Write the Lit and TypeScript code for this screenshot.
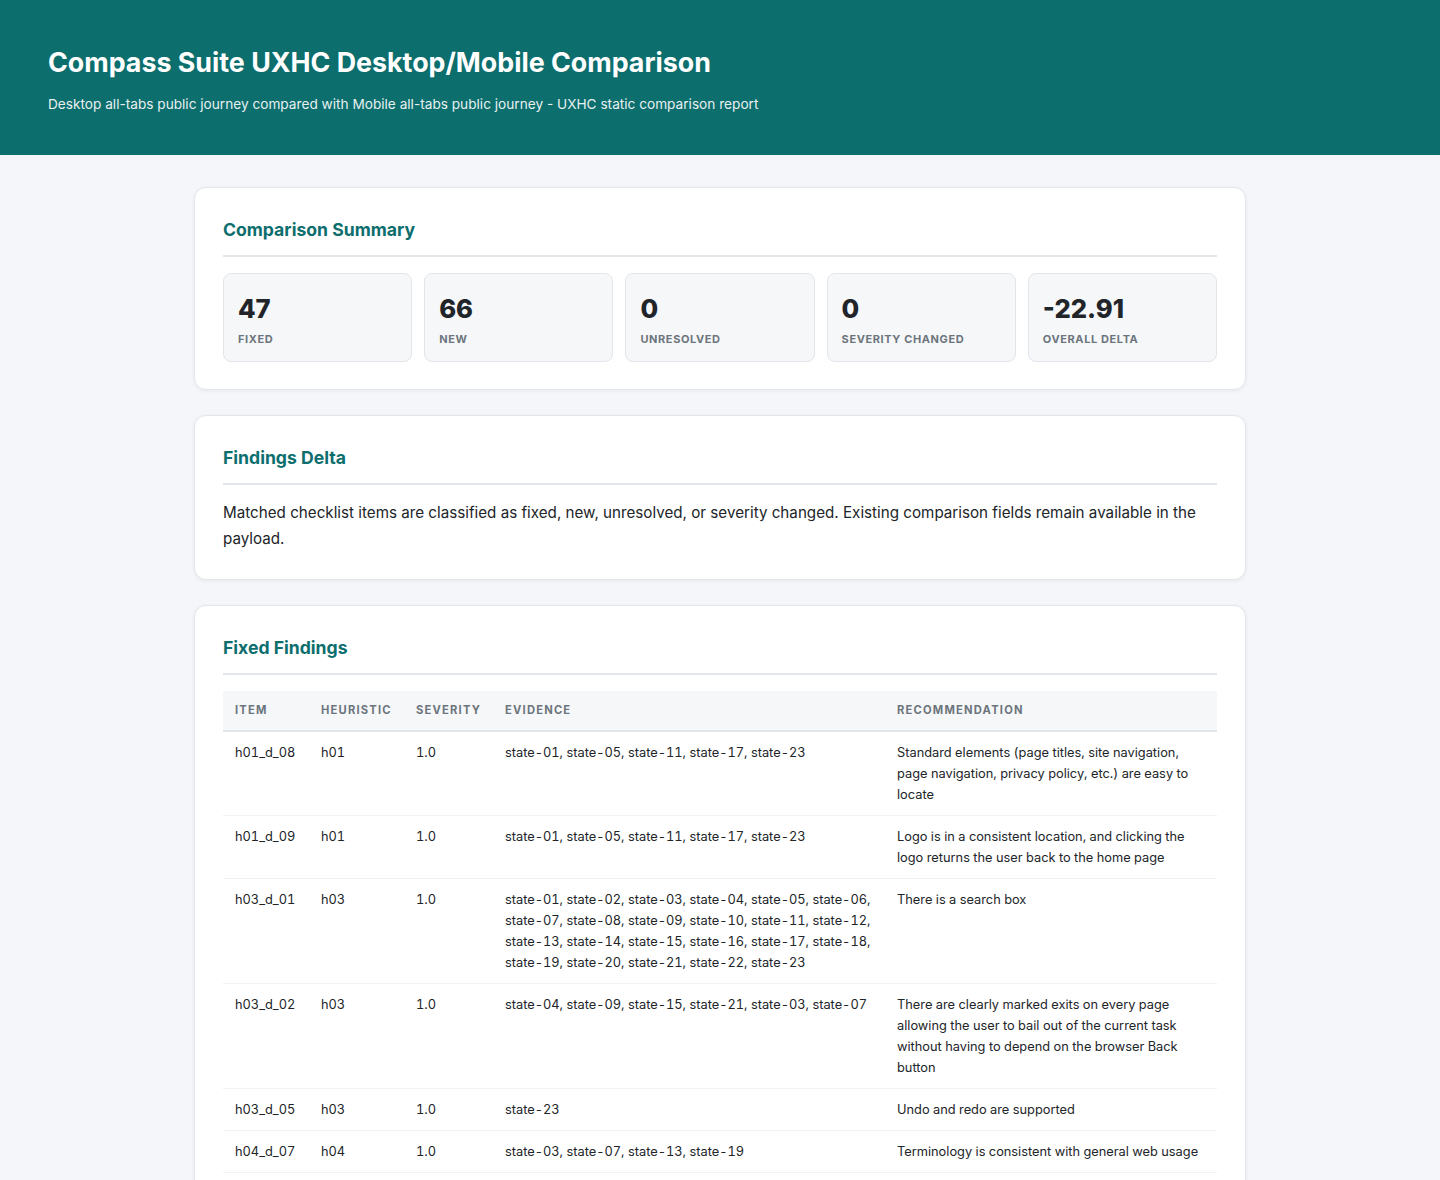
import { LitElement, html, css } from 'lit';
import { customElement } from 'lit/decorators.js';

const stats = [
  { value: '47', label: 'Fixed' },
  { value: '66', label: 'New' },
  { value: '0', label: 'Unresolved' },
  { value: '0', label: 'Severity Changed' },
  { value: '-22.91', label: 'Overall Delta' },
];

const s1 = 'state-01, state-05, state-11, state-17, state-23';

const rows = [
  ['h01_d_08', 'h01', '1.0', s1, 'Standard elements (page titles, site navigation, page navigation, privacy policy, etc.) are easy to locate'],
  ['h01_d_09', 'h01', '1.0', s1, 'Logo is in a consistent location, and clicking the logo returns the user back to the home page'],
  ['h03_d_01', 'h03', '1.0', 'state-01, state-02, state-03, state-04, state-05, state-06, state-07, state-08, state-09, state-10, state-11, state-12, state-13, state-14, state-15, state-16, state-17, state-18, state-19, state-20, state-21, state-22, state-23', 'There is a search box'],
  ['h03_d_02', 'h03', '1.0', 'state-04, state-09, state-15, state-21, state-03, state-07', 'There are clearly marked exits on every page allowing the user to bail out of the current task without having to depend on the browser Back button'],
  ['h03_d_05', 'h03', '1.0', 'state-23', 'Undo and redo are supported'],
  ['h04_d_07', 'h04', '1.0', 'state-03, state-07, state-13, state-19', 'Terminology is consistent with general web usage'],
];

@customElement('app-root')
export class AppRoot extends LitElement {
  static styles = css`
    :host {
      display: block;
      height: 1180px;
      overflow: hidden;
      background: #f4f6fa;
      color: #212529;
      font-family: Inter, 'Liberation Sans', sans-serif;
      font-size: 15.2px;
      line-height: 1.7;
    }

    header {
      box-sizing: border-box;
      height: 155px;
      padding: 40px 48px 0;
      background: #0d6e6e;
      color: #fff;
    }

    h1 {
      margin: 0 0 7px;
      font-size: 26.8px;
      font-weight: 700;
      line-height: 1.7;
    }

    .subtitle {
      margin: 0;
      font-size: 13.65px;
      line-height: 1.7;
      opacity: 0.9;
    }

    main {
      box-sizing: border-box;
      max-width: 1100px;
      margin: 0 auto;
      padding: 32px 24px;
    }

    .card {
      margin-bottom: 25px;
      padding: 28px 28px 27px;
      background: #fff;
      border: 1px solid #e2e6ea;
      border-radius: 12px;
      box-shadow: 0 1px 4px rgba(0, 0, 0, 0.06);
    }

    h2 {
      box-sizing: border-box;
      height: 41px;
      margin: 0 0 16px;
      border-bottom: 2px solid #e2e6ea;
      color: #0d6e6e;
      font-size: 17.6px;
      font-weight: 700;
      line-height: 28px;
    }

    p {
      margin: -0.7px 0 0;
    }

    .stats {
      display: grid;
      grid-template-columns: repeat(5, 1fr);
      gap: 12px;
    }

    .stat {
      padding: 14px 14px 13px;
      background: #f6f7f9;
      border: 1px solid #e2e6ea;
      border-radius: 8px;
    }

    .stat-value {
      font-size: 25.6px;
      font-weight: 800;
      line-height: 41px;
    }

    .stat-label {
      margin-top: 1px;
      color: #6c757d;
      font-size: 11px;
      font-weight: 700;
      letter-spacing: 0.6px;
      line-height: 18px;
      text-transform: uppercase;
    }

    table {
      width: 100%;
      border-collapse: collapse;
      table-layout: fixed;
      font-size: 12.8px;
      font-variant-numeric: tabular-nums;
      line-height: 21px;
    }

    th {
      box-sizing: border-box;
      padding: 10px 12px;
      background: #f6f7f9;
      border-bottom: 2px solid #e2e6ea;
      color: #6c757d;
      font-size: 11.2px;
      font-weight: 700;
      letter-spacing: 1.2px;
      line-height: 19px;
      text-align: left;
      text-transform: uppercase;
    }

    td {
      padding: 10px 12px;
      border-bottom: 1px solid #f0f2f5;
      vertical-align: top;
    }

    .col-item { width: 86px; }
    .col-heuristic { width: 95px; }
    .col-severity { width: 89px; }
    .col-evidence { width: 392px; }
  `;

  render() {
    return html`
      <header>
        <h1>Compass Suite UXHC Desktop/Mobile Comparison</h1>
        <p class="subtitle">Desktop all-tabs public journey compared with Mobile all-tabs public journey - UXHC static comparison report</p>
      </header>
      <main>
        <section class="card">
          <h2>Comparison Summary</h2>
          <div class="stats">
            ${stats.map(
              (s) => html`
                <div class="stat">
                  <div class="stat-value">${s.value}</div>
                  <div class="stat-label">${s.label}</div>
                </div>
              `
            )}
          </div>
        </section>
        <section class="card">
          <h2>Findings Delta</h2>
          <p>Matched checklist items are classified as fixed, new, unresolved, or severity changed. Existing comparison fields remain available in the payload.</p>
        </section>
        <section class="card">
          <h2>Fixed Findings</h2>
          <table>
            <thead>
              <tr>
                <th class="col-item">Item</th>
                <th class="col-heuristic">Heuristic</th>
                <th class="col-severity">Severity</th>
                <th class="col-evidence">Evidence</th>
                <th>Recommendation</th>
              </tr>
            </thead>
            <tbody>
              ${rows.map((r) => html`<tr>${r.map((c) => html`<td>${c}</td>`)}</tr>`)}
            </tbody>
          </table>
        </section>
      </main>
    `;
  }
}
